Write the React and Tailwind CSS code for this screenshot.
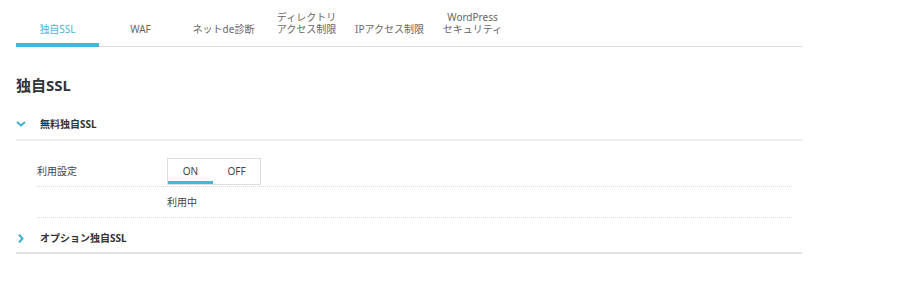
import { useState } from 'react';

const tabs = [
  ['独自SSL'],
  ['WAF'],
  ['ネットde診断'],
  ['ディレクトリ', 'アクセス制限'],
  ['IPアクセス制限'],
  ['WordPress', 'セキュリティ'],
];

const font = { fontFamily: '"Noto Sans", "Noto Sans CJK JP", sans-serif' };

function ChevronDown() {
  return (
    <svg width="10" height="6" viewBox="0 0 10 6" className="block">
      <path d="M1 1 L5 4.5 L9 1" fill="none" stroke="#3fb0d0" strokeWidth="2" />
    </svg>
  );
}

function ChevronRight() {
  return (
    <svg width="6" height="9" viewBox="0 0 6 9" className="block">
      <path d="M1 0.5 L4.5 4.5 L1 8.5" fill="none" stroke="#3fb0d0" strokeWidth="2" />
    </svg>
  );
}

export default function App() {
  const [active, setActive] = useState(0);
  const [enabled, setEnabled] = useState(true);

  return (
    <div className="w-[901px] h-[300px] bg-white text-[#333]" style={font}>
      <div className="ml-4 w-[786px]">
        {/* tab bar */}
        <div className="flex h-[47px] border-b border-[#dddddd]">
          {tabs.map((lines, i) => (
            <button
              key={i}
              onClick={() => setActive(i)}
              className={`relative w-[83px] h-full flex items-end justify-center pb-[11px] text-[10px] leading-[12px] text-center ${
                active === i ? 'text-[#47b7d4]' : 'text-[#666]'
              }`}
            >
              <span>
                {lines[0]}
                {lines[1] && <br />}
                {lines[1]}
              </span>
              {active === i && (
                <span className="absolute left-0 right-0 bottom-[-1px] h-[4px] bg-[#47b7d4]" />
              )}
            </button>
          ))}
        </div>

        <h1 className="mt-[28px] text-[15px] leading-[20px] font-bold text-[#333]">独自SSL</h1>

        {/* 無料独自SSL */}
        <div className="mt-[14px] h-[32px] flex items-center border-b-2 border-[#f0f0f0]">
          <div className="w-[24px] flex justify-start"><ChevronDown /></div>
          <span className="text-[10px] font-bold text-[#333]">無料独自SSL</span>
        </div>

        <div className="ml-[21px] mr-[10px]">
          <div className="flex items-center pt-[17px] pb-[1px] border-b border-dotted border-[#d8d8d8]">
            <div className="w-[130px] text-[10px] text-[#444]">利用設定</div>
            <div className="flex border border-[#dddddd] h-[27px] text-[10px] text-[#444]">
              <button
                onClick={() => setEnabled(true)}
                className="relative w-[45px] flex items-center justify-center"
              >
                ON
                {enabled && <span className="absolute left-0 right-0 bottom-0 h-[3px] bg-[#47b7d4]" />}
              </button>
              <button
                onClick={() => setEnabled(false)}
                className="relative w-[47px] flex items-center justify-center"
              >
                OFF
                {!enabled && <span className="absolute left-0 right-0 bottom-0 h-[3px] bg-[#47b7d4]" />}
              </button>
            </div>
          </div>
          <div className="flex items-center h-[31px] border-b border-dotted border-[#d8d8d8]">
            <div className="w-[130px]" />
            <div className="text-[10px] text-[#444]">{enabled ? '利用中' : '停止中'}</div>
          </div>
        </div>

        {/* オプション独自SSL */}
        <div className="mt-[7px] h-[29px] flex items-center border-b-2 border-[#e2e2e2]">
          <div className="w-[24px] pl-[2px]"><ChevronRight /></div>
          <span className="text-[10px] font-bold text-[#333]">オプション独自SSL</span>
        </div>
      </div>
    </div>
  );
}
